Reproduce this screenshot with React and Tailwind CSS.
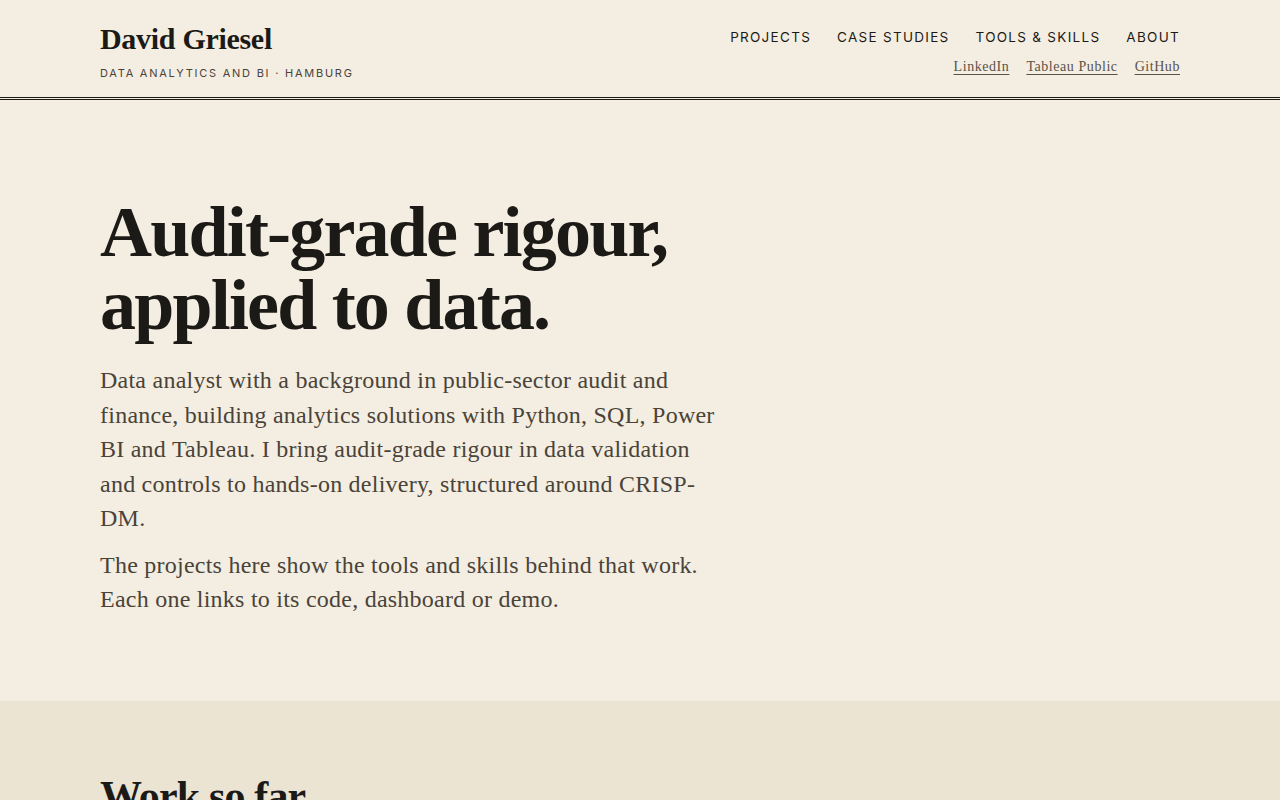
import React from 'react';

const NAV = ['Projects', 'Case Studies', 'Tools & Skills', 'About'];
const PROFILES = ['LinkedIn', 'Tableau Public', 'GitHub'];

const serif = "font-['Liberation_Serif',serif]";
const sans = "font-['Inter',sans-serif]";

function Header() {
  return (
    <header className="border-b-[3px] border-double border-[#1c1a17]">
      <div className="mx-auto flex w-[1080px] items-start justify-between pt-[20px] pb-[16px]">
        <div>
          <a href="#" className={`${serif} block text-[30px] font-bold leading-[38px] tracking-[-0.01em] text-[#1c1a17]`}>
            David Griesel
          </a>
          <p className={`${sans} mt-[7px] text-[11px] uppercase leading-[16px] tracking-[0.16em] text-[#4a4339]`}>
            Data analytics and BI · Hamburg
          </p>
        </div>
        <div className="flex flex-col items-end pt-[7px]">
          <nav className="flex gap-[26px]">
            {NAV.map((item) => (
              <a
                key={item}
                href="#"
                className={`${sans} text-[13.5px] uppercase leading-[20px] tracking-[0.095em] text-[#1c1a17]`}
              >
                {item}
              </a>
            ))}
          </nav>
          <div className="mt-[11px] flex gap-[17px]">
            {PROFILES.map((p) => (
              <a
                key={p}
                href="#"
                className={`${serif} text-[14px] leading-[17px] tracking-[0.04em] text-[#5a5248] underline underline-offset-[3px]`}
              >
                {p}
              </a>
            ))}
          </div>
        </div>
      </div>
    </header>
  );
}

function Hero() {
  return (
    <section className="bg-[#f4eee2]">
      <div className="mx-auto w-[1080px] pt-[96px] pb-[84px]">
        <h1 className={`${serif} text-[72px] font-bold leading-[73px] tracking-[-0.025em] text-[#1c1a17]`}>
          Audit-grade rigour,
          <br />
          applied to data.
        </h1>
        <div className={`${serif} mt-[21px] w-[621px] text-[24px] leading-[34.5px] tracking-[0.01em] text-[#4a4339]`}>
          <p>
            Data analyst with a background in public-sector audit and finance, building analytics
            solutions with Python, SQL, Power BI and Tableau. I bring audit-grade rigour in data
            validation and controls to hands-on delivery, structured around CRISP-DM.
          </p>
          <p className="mt-[12px]">
            The projects here show the tools and skills behind that work. Each one links to its
            code, dashboard or demo.
          </p>
        </div>
      </div>
    </section>
  );
}

function Work() {
  return (
    <section className="bg-[#ece4d3]">
      <div className="mx-auto w-[1080px] pt-[70px] pb-[80px]">
        <h2 className={`${serif} text-[42px] font-bold leading-[50px] tracking-[-0.02em] text-[#1c1a17]`}>
          Work so far
        </h2>
        <div className="h-[200px]" />
      </div>
    </section>
  );
}

export default function App() {
  return (
    <div className="min-h-screen bg-[#f4eee2]">
      <Header />
      <Hero />
      <Work />
    </div>
  );
}
